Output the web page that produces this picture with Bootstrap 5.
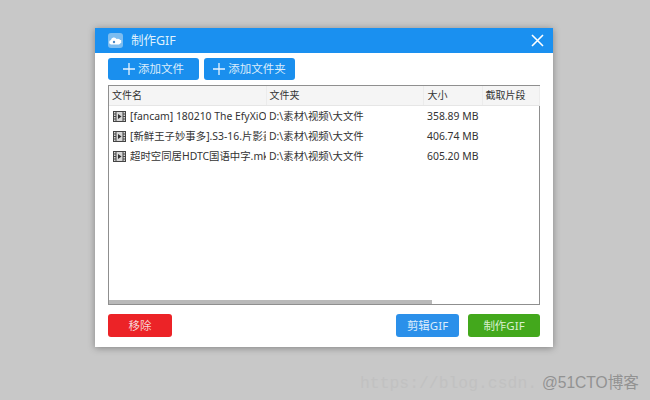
<!DOCTYPE html>
<html lang="zh-CN">
<head>
    <meta charset="UTF-8">
    <title>制作GIF</title>
    <link href="https://cdn.jsdelivr.net/npm/bootstrap@5.3.2/dist/css/bootstrap.min.css" rel="stylesheet">
    <style>
        body { background: #c8c8c8; height: 400px; overflow: hidden; font-family: "Noto Sans", "Noto Sans CJK SC", sans-serif; font-size: 10.4px; color: #333; padding: 28px 97px 0 95px; position: relative; }
        .gif-window { width: 458px; height: 319px; background: #fff; box-shadow: 0 1px 7px rgba(0,0,0,.35); }
        .gif-title { height: 25px; background: #1a90f0; color: #dff0fd; padding: 0 9px 0 13px; font-size: 12.5px; }
        .gif-title .logo { width: 15px; height: 15px; margin-right: 8px; }
        .gif-title span { padding-top: 2px; }
        .gif-body { padding: 5px 13px 10px; }
        .gif-btn { height: 22px; border: 0; border-radius: 3px; color: #dcedfc; font-size: 11.5px; padding: 0; line-height: 1; }
        .btn-add { background: #1a8fee; }
        .btn-add svg { margin-right: 3px; }
        .gif-gap { gap: 5px; }
        .w-file { width: 91px; }
        .btn-remove { background: #ec2327; width: 64px; height: 23px; color: #f6d5d5; }
        .btn-clip { background: #2b90ea; width: 63px; height: 23px; margin-right: 9px; }
        .btn-make { background: #43a81c; width: 72px; height: 23px; color: #d9f0cf; }
        .gif-list { height: 220px; margin: 5px 0 9px; border: 1px solid #8f8f8f; position: relative; }
        .gif-table { table-layout: fixed; width: 430px; margin: 0; border-collapse: collapse; }
        .gif-table th { height: 19px; font-size: 10px; font-weight: 400; padding: 0 0 0 3px; background: #f5f5f5; border-bottom: 1px solid #e6e6e6; border-right: 1px solid #ececec; white-space: nowrap; }
        .gif-table td { height: 20px; padding: 0 0 0 3px; white-space: nowrap; overflow: hidden; }
        .gif-table tbody tr:first-child td { height: 22px; padding-top: 1px; }
        .gif-table .size-col { padding-left: 4px; }
        .file-cell { display: flex; align-items: center; gap: 4px; overflow: hidden; }
        .file-cell svg { flex: none; margin-left: 1px; }
        .gif-scroll { position: absolute; left: 0; bottom: 0; width: 323px; height: 4px; background: #b9b9b9; }
        .watermark { position: absolute; left: 360px; top: 372px; font-family: "Liberation Mono", monospace; font-size: 16.4px; line-height: 22px; color: #c1c1c1; white-space: nowrap; }
        .watermark b { font-family: "Liberation Sans", "Noto Sans CJK SC", sans-serif; font-weight: 400; color: #929292; font-size: 15.6px; margin-left: -5px; }
    </style>
</head>
<body>
    <div class="gif-window">
        <div class="gif-title d-flex align-items-center">
            <svg class="logo" viewBox="0 0 15 15"><rect width="15" height="15" rx="3" fill="#7dbdf0"/><path d="M3 11.500a2.300 2.300 0 0 1 0-4.500 3 3 0 0 1 5.600-1 2.600 2.600 0 0 1 2.400 5.500z" fill="#fff"/><circle cx="6" cy="9" r="1.200" fill="#4a88c4"/><rect x="12" y="7" width="1.200" height="3" fill="#fff"/></svg>
            <span>制作GIF</span>
            <svg class="ms-auto" width="13" height="13" viewBox="0 0 13 13"><path d="M1 1l11 11M12 1L1 12" stroke="#fff" stroke-width="1.600" fill="none"/></svg>
        </div>
        <div class="gif-body">
            <div class="d-flex gif-gap">
                <button class="gif-btn btn-add w-file d-flex align-items-center justify-content-center"><svg width="12" height="12" viewBox="0 0 12 12"><path d="M6 0v12M0 6h12" stroke="#e8f4ff" stroke-width="1.300"/></svg>添加文件</button>
                <button class="gif-btn btn-add w-file d-flex align-items-center justify-content-center"><svg width="12" height="12" viewBox="0 0 12 12"><path d="M6 0v12M0 6h12" stroke="#e8f4ff" stroke-width="1.300"/></svg>添加文件夹</button>
            </div>
            <div class="gif-list">
                <table class="gif-table">
                    <colgroup><col style="width:157px"><col style="width:157px"><col style="width:59px"><col style="width:57px"></colgroup>
                    <thead>
                        <tr><th>文件名</th><th>文件夹</th><th class="size-col">大小</th><th>截取片段</th></tr>
                    </thead>
                    <tbody id="rows"></tbody>
                </table>
                <div class="gif-scroll"></div>
            </div>
            <div class="d-flex">
                <button class="gif-btn btn-remove me-auto">移除</button>
                <button class="gif-btn btn-clip">剪辑GIF</button>
                <button class="gif-btn btn-make">制作GIF</button>
            </div>
        </div>
    </div>
    <div class="watermark">https://blog.csdn. <b>@51CTO博客</b></div>

    <script src="https://cdn.jsdelivr.net/npm/bootstrap@5.3.2/dist/js/bootstrap.bundle.min.js"></script>
    <script>
        const files = [
            ['[fancam] 180210 The EfyXiO', '358.89 MB'],
            ['[新鲜王子妙事多].S3-16.片影畫', '406.74 MB'],
            ['超时空同居HDTC国语中字.mkv', '605.20 MB']
        ];
        const icon = '<svg width="13" height="11" viewBox="0 0 13 11"><rect x=".5" y=".5" width="12" height="10" fill="#d8d8d8" stroke="#444"/><path d="M3 1v9M10 1v9M1 3h2M1 5.500h2M1 8h2M10 3h2M10 5.500h2M10 8h2" stroke="#444"/><path d="M5 3l3.500 2.500L5 8z" fill="#333"/></svg>';
        document.getElementById('rows').innerHTML = files.map(f =>
            `<tr><td><div class="file-cell">${icon}<span>${f[0]}</span></div></td><td>D:\\素材\\视频\\大文件</td><td class="size-col">${f[1]}</td><td></td></tr>`
        ).join('');
    </script>
</body>
</html>
